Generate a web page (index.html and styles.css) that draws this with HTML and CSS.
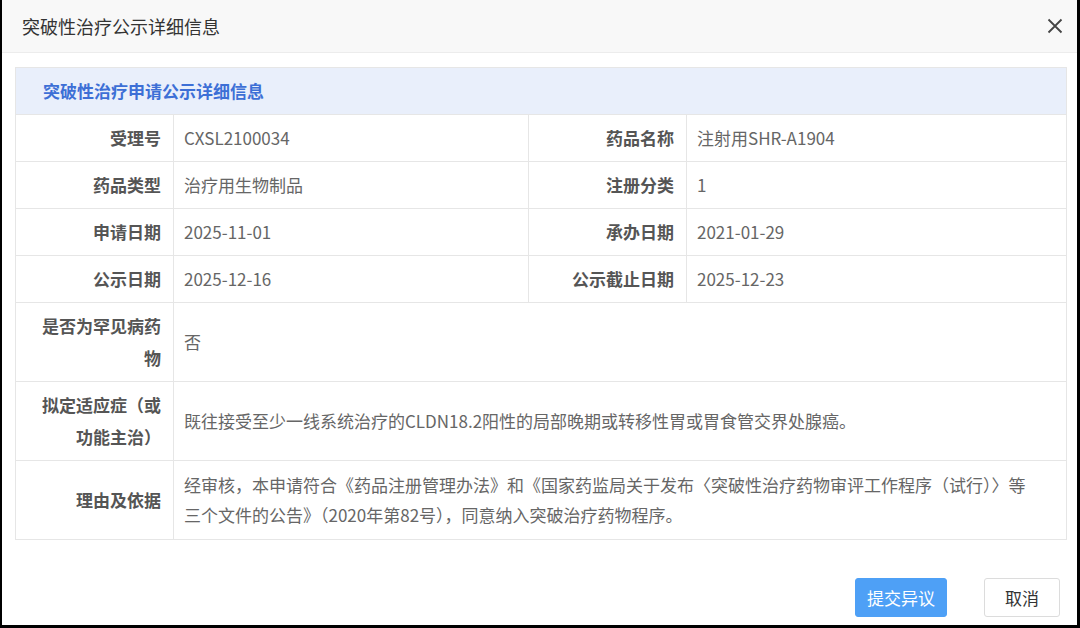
FILE: index.html
```html
<!doctype html>
<html lang="zh-CN">
  <head>
    <meta charset="UTF-8" />
    <meta name="viewport" content="width=device-width, initial-scale=1.0" />
    <title>突破性治疗公示详细信息</title>
    <link rel="stylesheet" href="styles.css">
  </head>
  <body>
    <div class="dialog">
      <div class="dialog-header">
        <span class="dialog-title">突破性治疗公示详细信息</span>
        <button class="close" aria-label="关闭">
          <svg width="16" height="16" viewBox="0 0 16 16">
            <path d="M1.5 1.5 L14.5 14.5 M14.5 1.5 L1.5 14.5" stroke="#444" stroke-width="1.8" fill="none" />
          </svg>
        </button>
      </div>

      <div class="dialog-body">
        <table class="detail">
          <colgroup>
            <col style="width: 158px" />
            <col style="width: 355px" />
            <col style="width: 158px" />
            <col />
          </colgroup>
          <tr>
            <th class="section" colspan="4">突破性治疗申请公示详细信息</th>
          </tr>
          <tr>
            <td class="label">受理号</td>
            <td class="value">CXSL2100034</td>
            <td class="label">药品名称</td>
            <td class="value">注射用SHR-A1904</td>
          </tr>
          <tr>
            <td class="label">药品类型</td>
            <td class="value">治疗用生物制品</td>
            <td class="label">注册分类</td>
            <td class="value">1</td>
          </tr>
          <tr>
            <td class="label">申请日期</td>
            <td class="value">2025-11-01</td>
            <td class="label">承办日期</td>
            <td class="value">2021-01-29</td>
          </tr>
          <tr>
            <td class="label">公示日期</td>
            <td class="value">2025-12-16</td>
            <td class="label">公示截止日期</td>
            <td class="value">2025-12-23</td>
          </tr>
          <tr>
            <td class="label">是否为罕见病药物</td>
            <td class="value" colspan="3">否</td>
          </tr>
          <tr>
            <td class="label">拟定适应症（或功能主治）</td>
            <td class="value" colspan="3">既往接受至少一线系统治疗的CLDN18.2阳性的局部晚期或转移性胃或胃食管交界处腺癌。</td>
          </tr>
          <tr>
            <td class="label">理由及依据</td>
            <td class="value long" colspan="3">经审核，本申请符合《药品注册管理办法》和《国家药监局关于发布〈突破性治疗药物审评工作程序（试行）〉等三个文件的公告》（2020年第82号），同意纳入突破治疗药物程序。</td>
          </tr>
        </table>
      </div>

      <div class="dialog-footer">
        <button class="btn btn-primary">提交异议</button>
        <button class="btn">取消</button>
      </div>
    </div>
  </body>
</html>
```

FILE: styles.css
```css
html,
body {
  margin: 0;
  height: 100%;
}

body {
  background-color: #000;
  font-family: "Noto Sans CJK SC", "Noto Sans", sans-serif;
  padding: 0 3px 3px 2px;
  box-sizing: border-box;
}

.dialog {
  background-color: white;
  height: 100%;
  display: flex;
  flex-direction: column;
}

.dialog-header {
  height: 52px;
  background-color: #f8f8f8;
  border-bottom: 1px solid #ececec;
  display: flex;
  align-items: center;
  justify-content: space-between;
  padding: 0 14px 0 20px;
}

.dialog-title {
  font-size: 18px;
  color: #333;
}

.close {
  background: none;
  border: none;
  padding: 0;
  width: 16px;
  height: 16px;
  cursor: pointer;
  display: flex;
}

.dialog-body {
  padding: 14px 10px 0 13px;
}

.detail {
  width: 100%;
  border-collapse: collapse;
  table-layout: fixed;
  font-size: 17px;
}

.detail td,
.detail th {
  border: 1px solid #e6e6e6;
  line-height: 32px;
  padding: 7px 12px 7px 10px;
}

.section {
  background-color: #e9effb;
  color: #3d6fd6;
  font-weight: bold;
  text-align: left;
  padding-left: 27px !important;
  height: 32px;
}

.label {
  text-align: right;
  color: #555;
  font-weight: bold;
}

.value {
  color: #666;
}

.detail .value.long {
  line-height: 30px;
  padding: 9px 33px 9px 10px;
}

.dialog-footer {
  margin-top: auto;
  display: flex;
  justify-content: flex-end;
  gap: 37px;
  padding: 0 17px 8px 0;
}

.btn {
  height: 39px;
  padding: 0 20px;
  border: 1px solid #dcdcdc;
  border-radius: 3px;
  background-color: white;
  color: #333;
  font-size: 17px;
  font-family: inherit;
  cursor: pointer;
}

.btn-primary {
  padding: 0 11px;
  background-color: #4ea0f6;
  border-color: #4ea0f6;
  color: white;
}
```
